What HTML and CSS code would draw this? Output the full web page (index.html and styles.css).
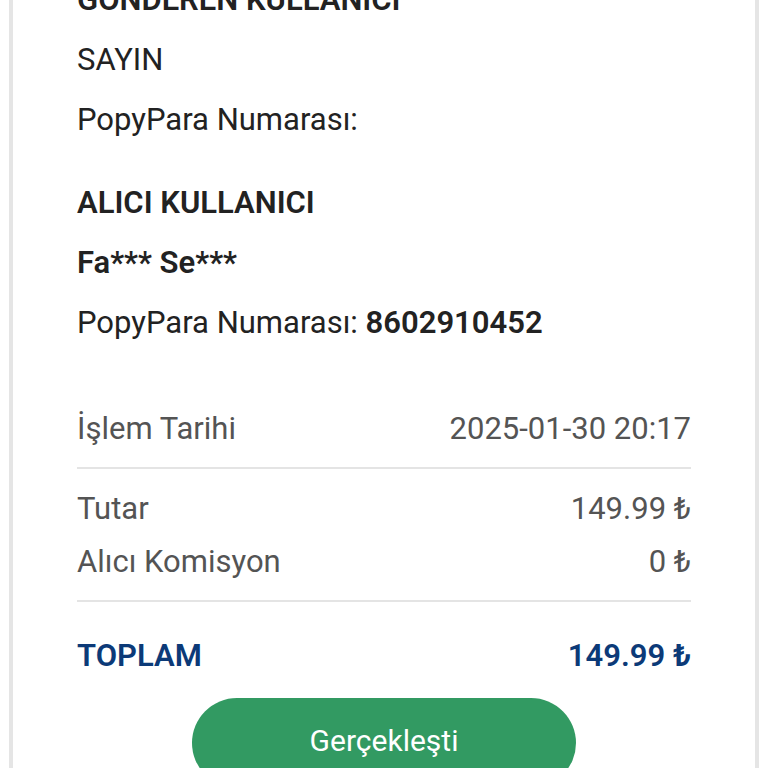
FILE: index.html
```html
<!DOCTYPE html>
<html lang="tr">
<head>
<meta charset="utf-8">
<title>İşlem Detayı</title>
<link rel="stylesheet" href="styles.css">
</head>
<body>
<div class="card">
  <section class="party">
    <div class="line title">GÖNDEREN KULLANICI</div>
    <div class="line">SAYIN</div>
    <div class="line">PopyPara Numarası:</div>
  </section>
  <section class="party receiver">
    <div class="line title">ALICI KULLANICI</div>
    <div class="line title">Fa*** Se***</div>
    <div class="line">PopyPara Numarası: <b class="num">8602910452</b></div>
  </section>
  <section class="details">
    <div class="row"><span>İşlem Tarihi</span><span>2025-01-30 20:17</span></div>
    <div class="divider"></div>
    <div class="row"><span>Tutar</span><span>149.99 ₺</span></div>
    <div class="row"><span>Alıcı Komisyon</span><span>0 ₺</span></div>
    <div class="divider"></div>
    <div class="row total"><span>TOPLAM</span><span>149.99 ₺</span></div>
  </section>
  <div class="actions">
    <button class="status">Gerçekleşti</button>
  </div>
</div>
</body>
</html>
```

FILE: styles.css
```css
html, body {
  margin: 0;
  padding: 0;
  background: #ffffff;
  overflow: hidden;
}

body {
  font-family: Roboto, "Noto Sans", "DejaVu Sans", sans-serif;
  font-size: 31px;
  color: #222222;
}

.card {
  margin: -30px 9px 0 9px;
  border-left: 4px solid #e5e5e5;
  border-right: 4px solid #e5e5e5;
  padding: 0 64px 40px;
  background: #ffffff;
}

.party .line {
  line-height: 60px;
  height: 60px;
  white-space: nowrap;
}

.title,
.num {
  font-weight: 600;
}

.receiver {
  margin-top: 23px;
}

.details {
  margin-top: 49px;
  color: #545454;
}

.row {
  display: flex;
  justify-content: space-between;
  line-height: 53px;
  height: 53px;
}

.divider {
  height: 2px;
  background: #e4e4e4;
  margin: 12px 0 13px;
}

.row.total {
  margin-top: 27px;
  color: #0c3a78;
  font-weight: 600;
}

.actions {
  display: flex;
  justify-content: center;
  margin-top: 16px;
}

.status {
  width: 384px;
  height: 90px;
  border: none;
  border-radius: 45px;
  background: #329a62;
  color: #ffffff;
  font-family: inherit;
  font-size: 30px;
  padding: 0 0 6px;
}
```
